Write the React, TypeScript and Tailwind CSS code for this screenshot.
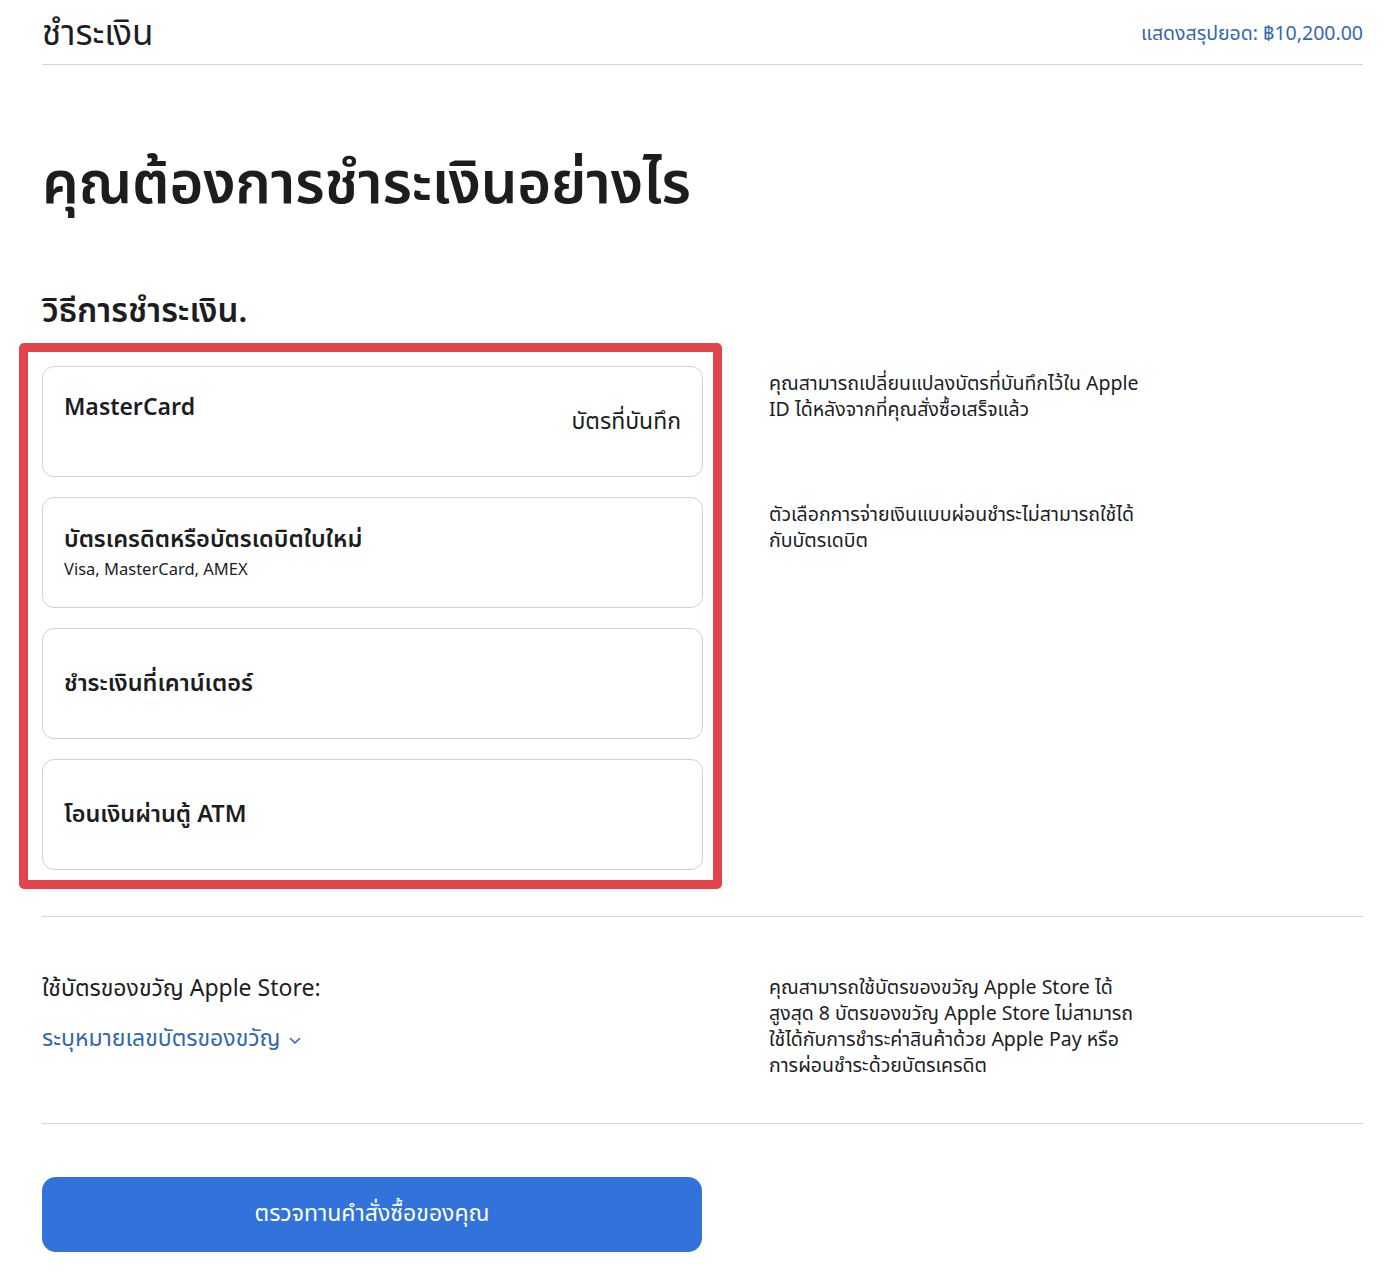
import React from "react";

const font = { fontFamily: '"Noto Sans Thai", "Noto Sans", "Inter", sans-serif' };

function Card({ children, className = "" }: { children: React.ReactNode; className?: string }) {
  return (
    <div className={`h-[111px] rounded-[12px] border border-[#d2d2d7] bg-white px-[21px] flex items-center ${className}`}>
      {children}
    </div>
  );
}

export default function App() {
  return (
    <div style={font} className="min-h-[1280px] bg-white text-[#1d1d1f] antialiased">
      <div className="px-[42px] pr-[37px]">
        <header className="h-[65px] pt-[5px] flex items-center justify-between border-b border-[#d6d6d6]">
          <div className="text-[35px] leading-none">ชำระเงิน</div>
          <div className="text-[19.5px] leading-none text-[#3467b0]">แสดงสรุปยอด: ฿10,200.00</div>
        </header>

        <h1 className="mt-[84px] text-[58px] leading-[72px] font-semibold tracking-[-0.2px]">คุณต้องการชำระเงินอย่างไร</h1>

        <h2 className="mt-[69px] text-[33px] leading-[44px] font-semibold">วิธีการชำระเงิน.</h2>

        <div className="mt-[32px] grid grid-cols-[660px_1fr] gap-x-[67px]">
          <div className="-ml-[23px] -mt-[23px] w-[703px] rounded-[5px] border-[9px] border-[#e2464c] pl-[14px] pt-[14px] pr-[10px] pb-[10px]">
            <div className="flex flex-col gap-[20px]">
              <Card className="justify-between">
                <div className="flex flex-col">
                  <div className="text-[23px] leading-[28px] font-semibold">MasterCard</div>
                  <div className="h-[28px]" />
                </div>
                <div className="text-[23px] leading-[28px]">บัตรที่บันทึก</div>
              </Card>
              <Card>
                <div className="flex flex-col">
                  <div className="text-[23.5px] leading-[30px] font-semibold">บัตรเครดิตหรือบัตรเดบิตใบใหม่</div>
                  <div className="mt-[4px] text-[16.5px] leading-[22px]">Visa, MasterCard, AMEX</div>
                </div>
              </Card>
              <Card>
                <div className="text-[23.5px] leading-[30px] font-semibold">ชำระเงินที่เคาน์เตอร์</div>
              </Card>
              <Card>
                <div className="text-[23.5px] leading-[30px] font-semibold">โอนเงินผ่านตู้ ATM</div>
              </Card>
            </div>
          </div>
          <div className="flex flex-col text-[19.5px] leading-[26px]">
            <div className="h-[131px] pt-[5px] whitespace-nowrap">
              คุณสามารถเปลี่ยนแปลงบัตรที่บันทึกไว้ใน Apple
              <br />
              ID ได้หลังจากที่คุณสั่งซื้อเสร็จแล้ว
            </div>
            <div className="pt-[5px] whitespace-nowrap">
              ตัวเลือกการจ่ายเงินแบบผ่อนชำระไม่สามารถใช้ได้
              <br />
              กับบัตรเดบิต
            </div>
          </div>
        </div>

        <div className="mt-[27px] border-t border-[#d6d6d6] pt-[58px] pb-[44px] grid grid-cols-[660px_1fr] gap-x-[67px]">
          <div>
            <div className="text-[23px] leading-[28px]">ใช้บัตรของขวัญ Apple Store:</div>
            <div className="mt-[22px] flex items-center gap-[9px] text-[23px] leading-[28px] text-[#3467b0]">
              <span>ระบุหมายเลขบัตรของขวัญ</span>
              <svg width="12" height="8" viewBox="0 0 12 8" fill="none" className="mt-[3px]">
                <path d="M1.5 1.5 L6 6 L10.5 1.5" stroke="#3467b0" strokeWidth="1.6" strokeLinecap="round" strokeLinejoin="round" />
              </svg>
            </div>
          </div>
          <div className="text-[19.5px] leading-[26px] whitespace-nowrap">
            คุณสามารถใช้บัตรของขวัญ Apple Store ได้
            <br />
            สูงสุด 8 บัตรของขวัญ Apple Store ไม่สามารถ
            <br />
            ใช้ได้กับการชำระค่าสินค้าด้วย Apple Pay หรือ
            <br />
            การผ่อนชำระด้วยบัตรเครดิต
          </div>
        </div>

        <div className="border-t border-[#d6d6d6] pt-[53px]">
          <button className="w-[660px] h-[75px] rounded-[14px] bg-[#3273db] text-white text-[23px] leading-none">
            ตรวจทานคำสั่งซื้อของคุณ
          </button>
        </div>
      </div>
    </div>
  );
}
